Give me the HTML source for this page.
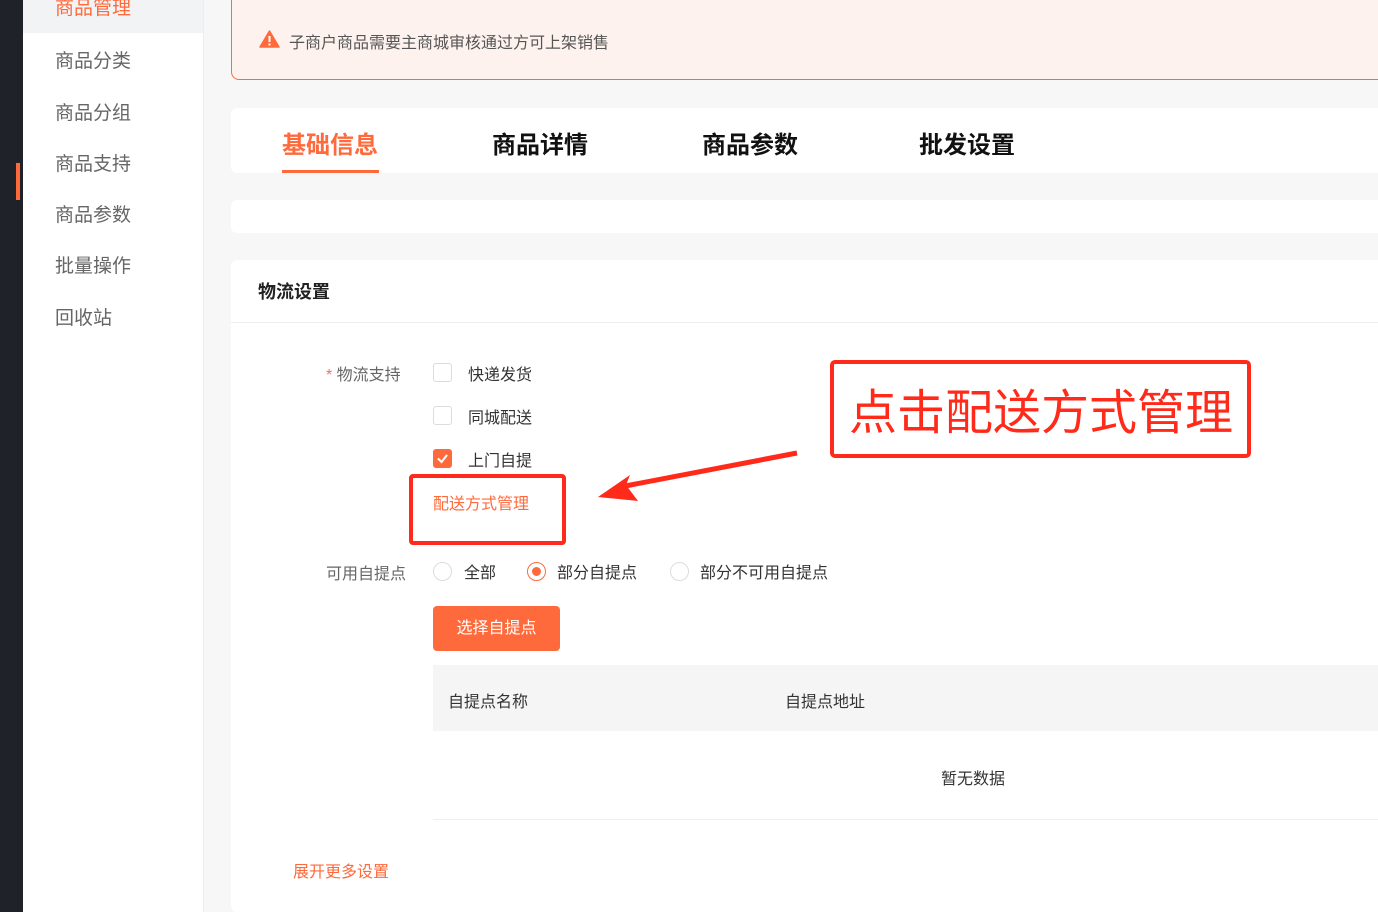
<!DOCTYPE html>
<html style="width:1378px;height:912px;overflow:hidden"><head><meta charset="utf-8"><style>
*{margin:0;padding:0;box-sizing:border-box}
body{width:1378px;height:912px;overflow:hidden;background:#f7f7f7;font-family:"Liberation Sans","Noto Sans CJK SC",sans-serif;position:relative;color:#333}
.abs{position:absolute}
.dark{left:0;top:0;width:23px;height:912px;background:#1f2229}
.side{left:23px;top:0;width:181px;height:912px;background:#fff;border-right:1px solid #eee}
.side div{position:absolute;left:32px;font-size:19px;color:#666;line-height:24px}
.card{background:#fff;border-radius:6px}
.chk{width:19px;height:19px;border:1px solid #dcdcdc;border-radius:3px;background:#fff}
.lbl{font-size:16px;color:#333}
.radio{width:19px;height:19px;border:1px solid #dcdcdc;border-radius:50%;background:#fff}
</style></head><body>
<div class="abs dark"></div>
<div class="abs" style="left:16px;top:163px;width:4px;height:37px;background:#ff6a3c"></div>
<div class="abs side">
 <div style="left:0;top:0;width:180px;height:33px;background:#f2f3f5"></div>
 <div style="top:-3px;color:#ff6a3c">商品管理</div>
 <div style="top:50px">商品分类</div>
 <div style="top:102px">商品分组</div>
 <div style="top:153px">商品支持</div>
 <div style="top:204px">商品参数</div>
 <div style="top:255px">批量操作</div>
 <div style="top:307px">回收站</div>
</div>
<div class="abs" style="left:231px;top:-10px;width:1160px;height:90px;background:#fef2ee;border:1px solid #ff6a3c;border-radius:8px"></div>
<svg class="abs" style="left:259px;top:30px" width="21" height="18" viewBox="0 0 21 18"><path d="M10.5 1 L20 17 L1 17 Z" fill="#ff6a3c" stroke="#ff6a3c" stroke-linejoin="round" stroke-width="1.5"/><rect x="9.5" y="6" width="2" height="6" fill="#fff"/><rect x="9.5" y="13.5" width="2" height="2" fill="#fff"/></svg>
<div class="abs" style="left:289px;top:29px;font-size:16px;color:#555">子商户商品需要主商城审核通过方可上架销售</div>
<div class="abs card" style="left:231px;top:108px;width:1160px;height:65px"></div>
<div class="abs" style="left:282px;top:125px;font-size:24px;font-weight:bold;color:#ff6a3c">基础信息</div>
<div class="abs" style="left:282px;top:170px;width:97px;height:3px;background:#ff6a3c"></div>
<div class="abs" style="left:492px;top:125px;font-size:24px;font-weight:bold;color:#111">商品详情</div>
<div class="abs" style="left:702px;top:125px;font-size:24px;font-weight:bold;color:#111">商品参数</div>
<div class="abs" style="left:919px;top:125px;font-size:24px;font-weight:bold;color:#111">批发设置</div>
<div class="abs card" style="left:231px;top:200px;width:1160px;height:33px"></div>
<div class="abs card" style="left:231px;top:260px;width:1160px;height:652px"></div>
<div class="abs" style="left:258px;top:278px;font-size:18px;font-weight:bold;color:#222">物流设置</div>
<div class="abs" style="left:231px;top:322px;width:1147px;height:1px;background:#eee"></div>
<div class="abs lbl" style="left:326px;top:361px;color:#666"><span style="color:#f56c6c">*</span> 物流支持</div>
<div class="abs chk" style="left:433px;top:363px"></div>
<div class="abs lbl" style="left:468px;top:361px">快递发货</div>
<div class="abs chk" style="left:433px;top:406px"></div>
<div class="abs lbl" style="left:468px;top:404px">同城配送</div>
<div class="abs chk" style="left:433px;top:449px;background:#ff6a3c;border-color:#ff6a3c"><svg width="17" height="17" viewBox="0 0 17 17" style="position:absolute;left:0;top:0"><path d="M4 8.5 L7.5 12 L13 5" fill="none" stroke="#fff" stroke-width="2"/></svg></div>
<div class="abs lbl" style="left:468px;top:447px">上门自提</div>
<div class="abs" style="left:433px;top:490px;font-size:16px;color:#ff6a3c">配送方式管理</div>
<div class="abs" style="left:409px;top:474px;width:157px;height:71px;border:4px solid #ff2a1a;border-radius:4px"></div>
<svg class="abs" style="left:590px;top:445px" width="215" height="60"><path d="M207 8 L30 42" stroke="#ff2a1a" stroke-width="5"/><path d="M8 52 L40 30 L36 40 L48 56 Z" fill="#ff2a1a"/></svg>
<div class="abs" style="left:830px;top:360px;width:421px;height:98px;border:4px solid #ff2a1a;border-radius:5px"></div>
<div class="abs" style="left:849px;top:378px;font-size:48px;line-height:60px;color:#ff2a1a;font-family:'Noto Sans CJK SC',sans-serif">点击配送方式管理</div>
<div class="abs lbl" style="left:326px;top:560px;color:#666">可用自提点</div>
<div class="abs radio" style="left:433px;top:562px"></div>
<div class="abs lbl" style="left:464px;top:559px">全部</div>
<div class="abs radio" style="left:527px;top:562px;border-color:#ff6a3c"><div style="position:absolute;left:4px;top:4px;width:9px;height:9px;border-radius:50%;background:#ff6a3c"></div></div>
<div class="abs lbl" style="left:557px;top:559px">部分自提点</div>
<div class="abs radio" style="left:670px;top:562px"></div>
<div class="abs lbl" style="left:700px;top:559px">部分不可用自提点</div>
<div class="abs" style="left:433px;top:606px;width:127px;height:45px;background:#ff6a3c;border-radius:4px;color:#fff;font-size:16px;line-height:45px;text-align:center">选择自提点</div>
<div class="abs" style="left:433px;top:665px;width:945px;height:66px;background:#f5f5f5"></div>
<div class="abs lbl" style="left:448px;top:688px">自提点名称</div>
<div class="abs lbl" style="left:785px;top:688px">自提点地址</div>
<div class="abs" style="left:433px;top:819px;width:945px;height:1px;background:#eee"></div>
<div class="abs lbl" style="left:941px;top:765px">暂无数据</div>
<div class="abs" style="left:293px;top:858px;font-size:16px;color:#ff6a3c">展开更多设置</div>
</body></html>
